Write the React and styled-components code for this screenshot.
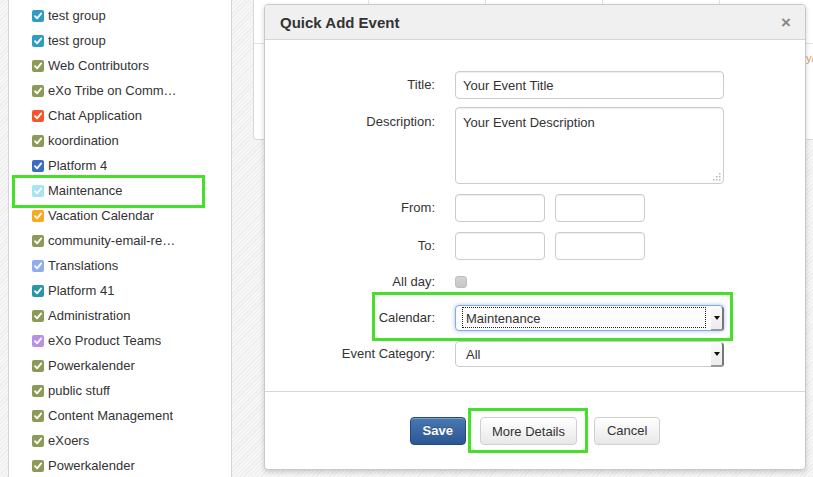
import React from "react";
import styled, { createGlobalStyle } from "styled-components";

const GlobalStyle = createGlobalStyle`
  html, body {
    margin: 0;
    padding: 0;
  }
  body {
    font-family: "Liberation Sans", Arial, sans-serif;
    font-size: 13px;
    color: #333;
  }
`;

const Page = styled.div`
  display: flex;
  width: 813px;
  height: 477px;
  overflow: hidden;
  padding-left: 8px;
  box-sizing: border-box;
  background-color: #f3f3f3;
  background-image: repeating-linear-gradient(
    135deg,
    #f6f6f6 0 2px,
    #ededed 2px 3px
  );
`;

const Sidebar = styled.div`
  width: 224px;
  flex-shrink: 0;
  box-sizing: border-box;
  background: #fff;
  border-left: 1px solid #d4d4d4;
  border-right: 1px solid #d4d4d4;
  padding-top: 3px;
`;

const CalItem = styled.div`
  position: relative;
  display: flex;
  align-items: center;
  height: 25px;
  padding-left: 23px;
  gap: 4px;

  ${(p) =>
    p.$marked &&
    `
    &::after {
      content: "";
      position: absolute;
      left: 3px;
      right: 26px;
      top: -3px;
      bottom: -5px;
      border: 3px solid #45e028;
    }
  `}
`;

const CalName = styled.span`
  max-width: 130px;
  white-space: nowrap;
  overflow: hidden;
  text-overflow: ellipsis;
  color: #333;
  font-size: 13px;
`;

const Main = styled.div`
  position: relative;
  flex: 1;
  padding-left: 21px;
`;

const CalPanel = styled.div`
  height: 140px;
  box-sizing: border-box;
  background: #fff;
  border-left: 1px solid #d8d8d8;
  border-bottom: 1px solid #d8d8d8;
  border-bottom-left-radius: 4px;
`;

const DayHeader = styled.div`
  display: grid;
  grid-template-columns: 115px repeat(5, 117px);
  height: 43px;
  border-bottom: 1px solid #e2e2e2;
`;

const DayCell = styled.div`
  border-right: 1px solid #e2e2e2;
`;

const PanelBody = styled.div`
  display: flex;
  padding-top: 8px;
  padding-left: 552px;
  font-size: 11px;
  white-space: nowrap;
  color: #c9a27a;
`;

const Modal = styled.div`
  position: absolute;
  left: 32px;
  top: 4px;
  width: 542px;
  box-sizing: border-box;
  background: #fff;
  border: 1px solid #c8c8c8;
  border-radius: 4px;
  box-shadow: 0 2px 5px rgba(0, 0, 0, 0.18);
  overflow: hidden;
`;

const ModalHeader = styled.div`
  display: flex;
  align-items: center;
  justify-content: space-between;
  height: 34px;
  padding: 0 14px 0 15px;
  background: #f0f0f0;
  border-bottom: 1px solid #d6d6d6;
`;

const ModalTitle = styled.h3`
  margin: 0;
  font-size: 15px;
  font-weight: bold;
  color: #333;
`;

const Close = styled.span`
  font-size: 17px;
  font-weight: bold;
  color: #8a8a8a;
  line-height: 1;
`;

const ModalBody = styled.div`
  padding: 31px 0 24px;
  border-bottom: 1px solid #d6d6d6;
`;

const Row = styled.div`
  position: relative;
  display: flex;
  align-items: ${(p) => (p.$top ? "flex-start" : "center")};
  min-height: ${(p) => p.$h || 28}px;
  margin-bottom: ${(p) => p.$mb || 0}px;
`;

const Label = styled.label`
  width: 190px;
  flex-shrink: 0;
  padding-right: 20px;
  box-sizing: border-box;
  text-align: right;
  line-height: 16px;
  padding-top: ${(p) => (p.$top ? 7 : 0)}px;
  color: #333;
`;

const Fields = styled.div`
  display: flex;
  gap: 10px;
`;

const TextInput = styled.div`
  width: ${(p) => p.$w || 269}px;
  height: ${(p) => p.$h || 28}px;
  box-sizing: border-box;
  border: 1px solid #ccc;
  border-radius: 4px;
  box-shadow: inset 0 1px 1px rgba(0, 0, 0, 0.07);
  padding: 0 7px;
  display: flex;
  align-items: center;
  color: #333;
`;

const TextArea = styled.div`
  position: relative;
  width: 269px;
  height: 77px;
  box-sizing: border-box;
  border: 1px solid #ccc;
  border-radius: 4px;
  box-shadow: inset 0 1px 1px rgba(0, 0, 0, 0.07);
  padding: 6px 7px;
  line-height: 18px;
  color: #333;
`;

const Grip = styled.svg`
  position: absolute;
  right: 2px;
  bottom: 2px;
`;

const CheckBox = styled.span`
  width: 12px;
  height: 12px;
  box-sizing: border-box;
  border-radius: 3px;
  border: 1px solid #bdbdbd;
  background: linear-gradient(#d4d4d4, #c6c6c6);
`;

const Select = styled.div`
  position: relative;
  display: flex;
  align-items: center;
  width: 269px;
  height: 26px;
  box-sizing: border-box;
  border: 1px solid ${(p) => (p.$focus ? "#86a9df" : "#ccc")};
  border-radius: 4px;
  box-shadow: ${(p) =>
    p.$focus ? "0 0 4px rgba(82, 138, 236, 0.55)" : "none"};
  background: ${(p) => (p.$focus ? "#fcfcfc" : "#fff")};
  padding-left: 10px;
  color: #333;
`;

const FocusRing = styled.span`
  position: absolute;
  left: 6px;
  top: 1px;
  right: 17px;
  bottom: 2px;
  border: 1px dotted #222;
`;

const SelectText = styled.span`
  position: relative;
  flex: 1;
`;

const ArrowBox = styled.span`
  display: flex;
  align-items: center;
  justify-content: center;
  width: 11px;
  align-self: stretch;
  background: linear-gradient(#fafafa, #ececec);
  border-right: 2px solid #777;
  border-bottom: 2px solid #999;
  border-radius: 0 3px 3px 0;
  margin: 1px -1px -1px 0;

  &::before {
    content: "";
    border-left: 3px solid transparent;
    border-right: 3px solid transparent;
    border-top: 4px solid #111;
  }
`;

const Highlight = styled.span`
  position: absolute;
  left: 107px;
  top: -13px;
  width: 361px;
  height: 49px;
  box-sizing: border-box;
  border: 3px solid #45e028;
  pointer-events: none;
`;

const Footer = styled.div`
  display: flex;
  align-items: center;
  justify-content: center;
  height: 77px;
`;

const Button = styled.button`
  height: 28px;
  padding: 0 ${(p) => p.$px || 14}px;
  font-family: "Liberation Sans", Arial, sans-serif;
  font-size: 13px;
  border-radius: 4px;
  cursor: pointer;
  color: #333;
  background: linear-gradient(#ffffff, #e8e8e8);
  border: 1px solid #cfcfcf;
  box-shadow: inset 0 1px 0 rgba(255, 255, 255, 0.3);
`;

const PrimaryButton = styled(Button)`
  color: #fff;
  font-weight: bold;
  background: linear-gradient(#4a78b3, #2b5792);
  border-color: #234a7c;
  text-shadow: 0 -1px 0 rgba(0, 0, 0, 0.25);
`;

const ButtonFrame = styled.span`
  display: inline-flex;
  padding: 6px 8px 5px 9px;
  border: 3px solid #45e028;
  margin: 0 6px 0 2px;
`;

const calendars = [
  { name: "test group", color: "#2f9dc3" },
  { name: "test group", color: "#2f9dc3" },
  { name: "Web Contributors", color: "#8c9a58" },
  { name: "eXo Tribe on Community", color: "#8c9a58" },
  { name: "Chat Application", color: "#f5552b" },
  { name: "koordination", color: "#8c9a58" },
  { name: "Platform 4", color: "#3a6cc6" },
  { name: "Maintenance", color: "#a6e3f3", marked: true },
  { name: "Vacation Calendar", color: "#f9a91e" },
  { name: "community-email-reports", color: "#8c9a58" },
  { name: "Translations", color: "#8fadee" },
  { name: "Platform 41", color: "#2996ab" },
  { name: "Administration", color: "#8c9a58" },
  { name: "eXo Product Teams", color: "#b890e6" },
  { name: "Powerkalender", color: "#8c9a58" },
  { name: "public stuff", color: "#8c9a58" },
  { name: "Content Management", color: "#8c9a58" },
  { name: "eXoers", color: "#8c9a58" },
  { name: "Powerkalender", color: "#8c9a58" },
];

const ColorCheck = ({ color }) => (
  <svg width="12" height="12" viewBox="0 0 12 12">
    <rect width="12" height="12" rx="2" fill={color} />
    <path
      d="M3 6.2 L5.1 8.4 L9.2 3.4"
      fill="none"
      stroke="#fff"
      strokeWidth="1.8"
      strokeLinecap="round"
      strokeLinejoin="round"
    />
  </svg>
);

const ResizeGrip = () => (
  <Grip width="8" height="8" viewBox="0 0 8 8">
    {[
      [6, 0],
      [6, 3],
      [3, 3],
      [6, 6],
      [3, 6],
      [0, 6],
    ].map(([x, y], i) => (
      <rect key={i} x={x} y={y} width="1.5" height="1.5" fill="#b5b5b5" />
    ))}
  </Grip>
);

export default function App() {
  return (
    <>
      <GlobalStyle />
      <Page>
        <Sidebar>
          {calendars.map((c, i) => (
            <CalItem key={i} $marked={c.marked}>
              <ColorCheck color={c.color} />
              <CalName>{c.name}</CalName>
            </CalItem>
          ))}
        </Sidebar>

        <Main>
          <CalPanel>
            <DayHeader>
              {Array.from({ length: 6 }).map((_, i) => (
                <DayCell key={i} />
              ))}
            </DayHeader>
            <PanelBody>y/(</PanelBody>
          </CalPanel>

          <Modal>
            <ModalHeader>
              <ModalTitle>Quick Add Event</ModalTitle>
              <Close>×</Close>
            </ModalHeader>

            <ModalBody>
              <Row $mb={8}>
                <Label>Title:</Label>
                <TextInput>Your Event Title</TextInput>
              </Row>
              <Row $top $h={77} $mb={10}>
                <Label $top>Description:</Label>
                <TextArea>
                  Your Event Description
                  <ResizeGrip />
                </TextArea>
              </Row>
              <Row $mb={10}>
                <Label>From:</Label>
                <Fields>
                  <TextInput $w={90} />
                  <TextInput $w={90} />
                </Fields>
              </Row>
              <Row $mb={8}>
                <Label>To:</Label>
                <Fields>
                  <TextInput $w={90} />
                  <TextInput $w={90} />
                </Fields>
              </Row>
              <Row $mb={9}>
                <Label>All day:</Label>
                <CheckBox />
              </Row>
              <Row $h={26} $mb={10}>
                <Label>Calendar:</Label>
                <Select $focus>
                  <FocusRing />
                  <SelectText>Maintenance</SelectText>
                  <ArrowBox />
                </Select>
                <Highlight />
              </Row>
              <Row $h={26}>
                <Label>Event Category:</Label>
                <Select>
                  <SelectText>All</SelectText>
                  <ArrowBox />
                </Select>
              </Row>
            </ModalBody>

            <Footer>
              <PrimaryButton $px={12}>Save</PrimaryButton>
              <ButtonFrame>
                <Button $px={11}>More Details</Button>
              </ButtonFrame>
              <Button $px={12}>Cancel</Button>
            </Footer>
          </Modal>
        </Main>
      </Page>
    </>
  );
}
